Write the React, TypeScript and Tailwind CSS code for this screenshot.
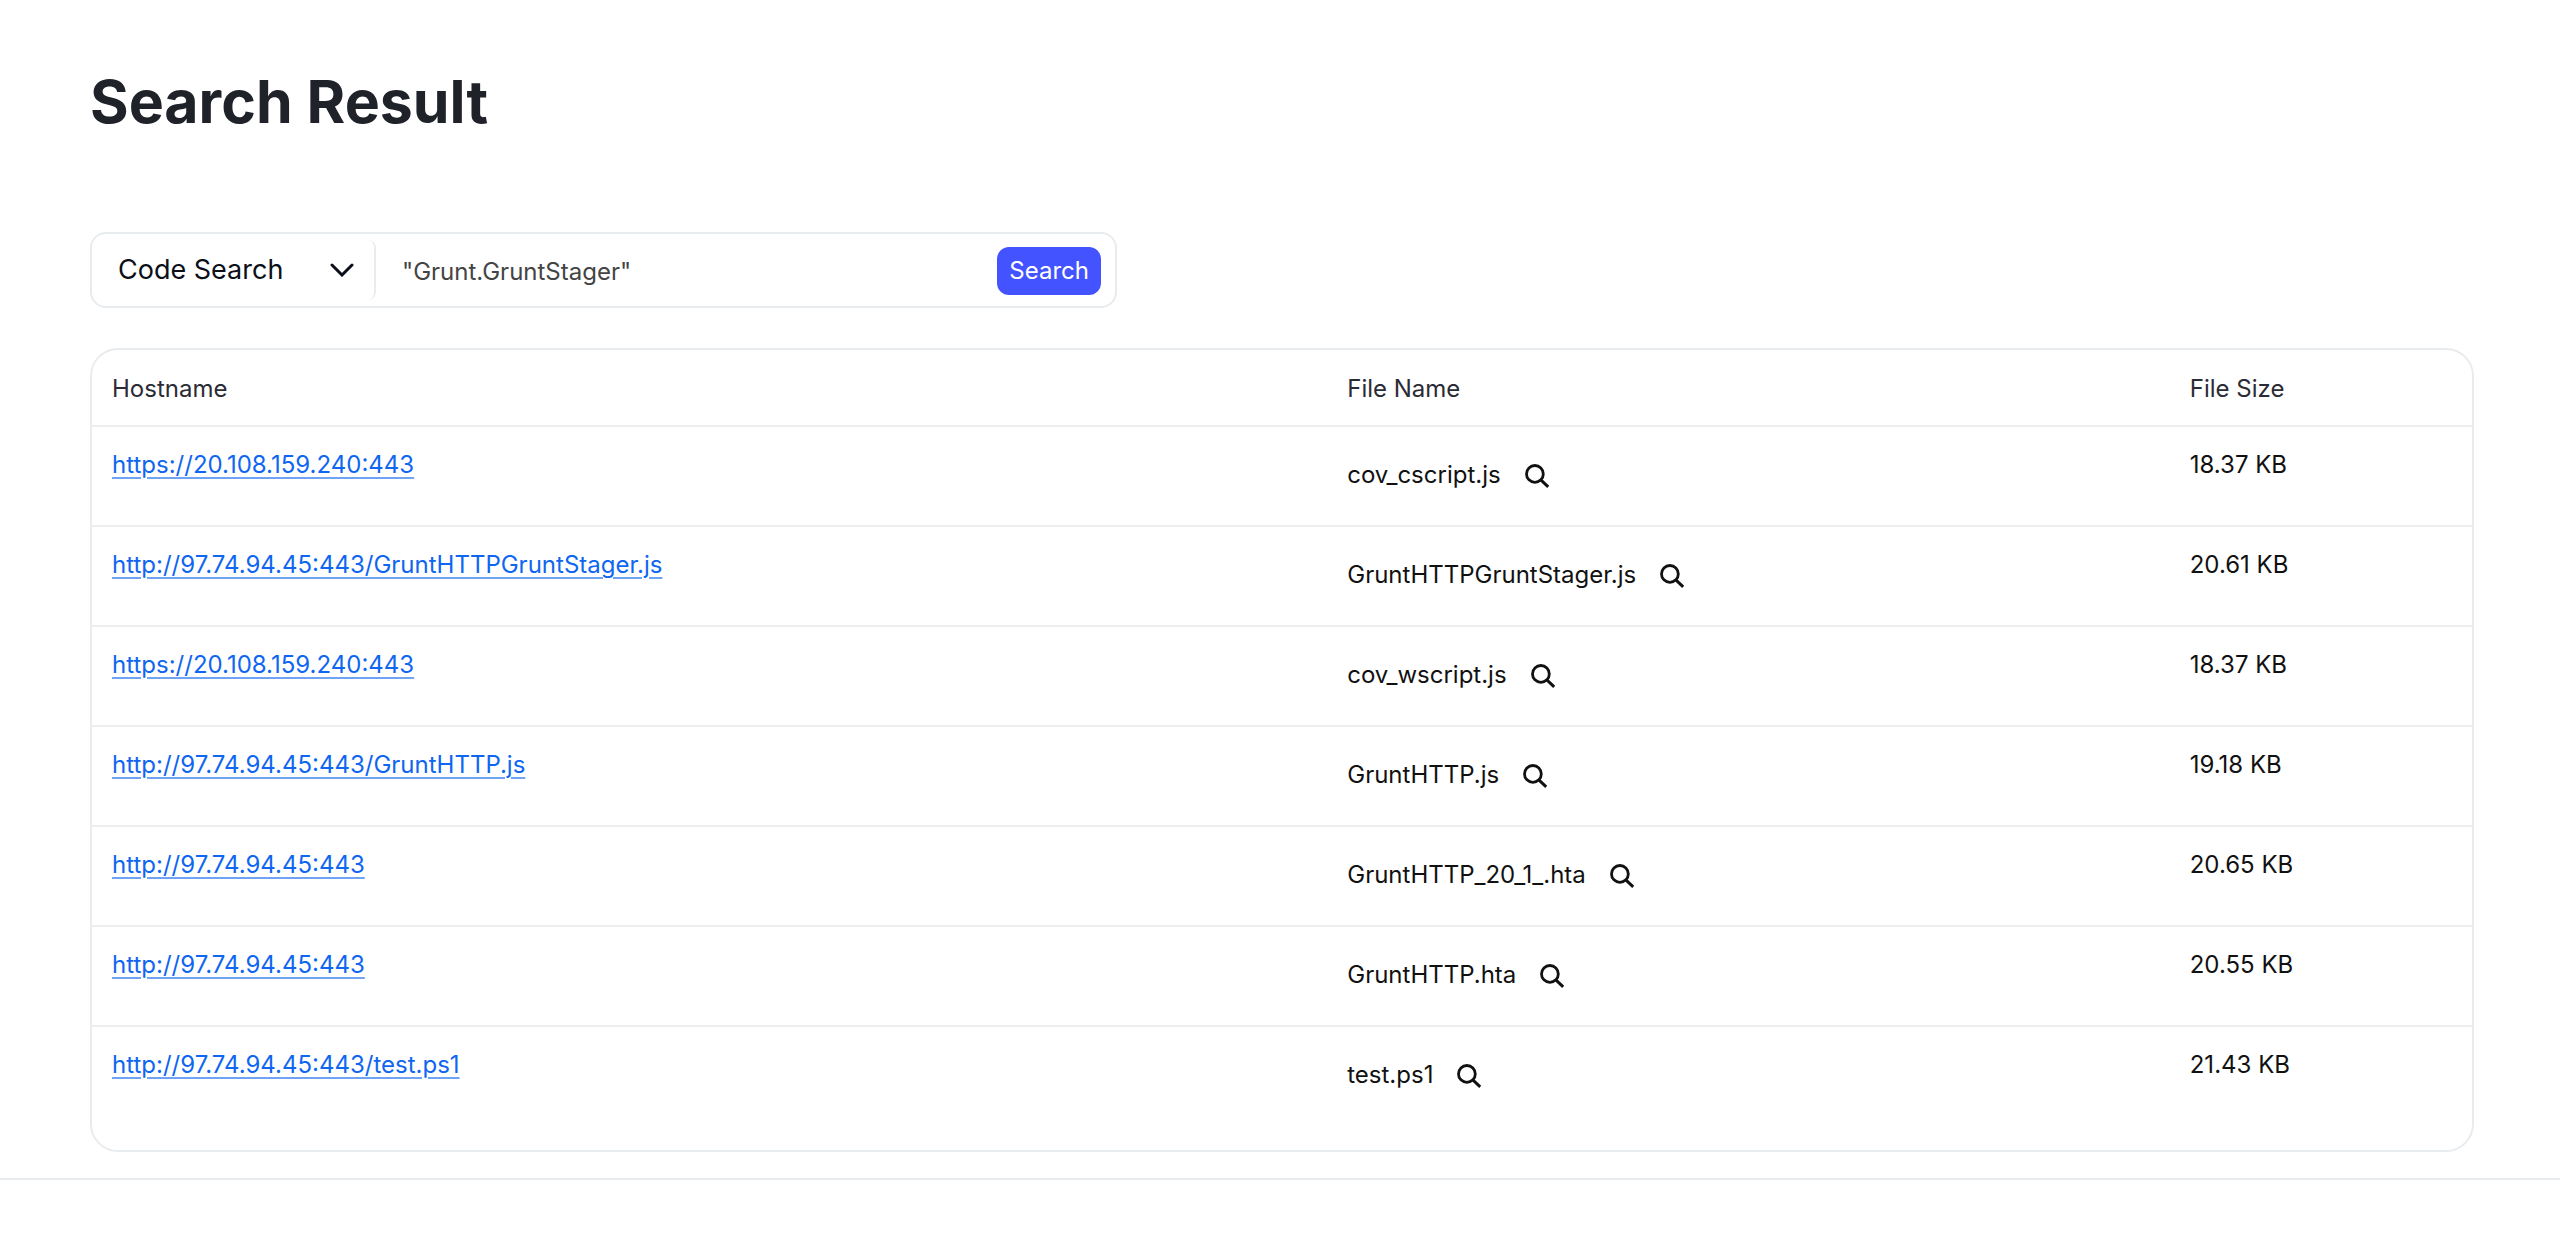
type Result = { host: string; file: string; size: string };

const results: Result[] = [
  { host: "https://20.108.159.240:443", file: "cov_cscript.js", size: "18.37 KB" },
  { host: "http://97.74.94.45:443/GruntHTTPGruntStager.js", file: "GruntHTTPGruntStager.js", size: "20.61 KB" },
  { host: "https://20.108.159.240:443", file: "cov_wscript.js", size: "18.37 KB" },
  { host: "http://97.74.94.45:443/GruntHTTP.js", file: "GruntHTTP.js", size: "19.18 KB" },
  { host: "http://97.74.94.45:443", file: "GruntHTTP_20_1_.hta", size: "20.65 KB" },
  { host: "http://97.74.94.45:443", file: "GruntHTTP.hta", size: "20.55 KB" },
  { host: "http://97.74.94.45:443/test.ps1", file: "test.ps1", size: "21.43 KB" },
];

function MagnifierIcon() {
  return (
    <svg viewBox="0 0 24 24" className="size-6" fill="none" stroke="currentColor" strokeWidth="2.8" aria-hidden="true">
      <circle cx="9.9" cy="9.9" r="8.4" />
      <path d="M15.8 15.8 23.2 22.8" strokeWidth="3" />
    </svg>
  );
}

function ChevronIcon() {
  return (
    <svg viewBox="0 0 24 14" className="pointer-events-none absolute right-5 h-[14px] w-6" fill="none" stroke="currentColor" strokeWidth="3" strokeLinecap="round" strokeLinejoin="miter" aria-hidden="true">
      <path d="M2 2l10 10L22 2" />
    </svg>
  );
}

function SearchBar() {
  return (
    <form className="flex h-[76px] w-full max-w-[1027px] items-center rounded-2xl border-2 border-[#e9ecee] pr-[14px]" onSubmit={(e) => e.preventDefault()}>
      <div className="relative flex h-15 w-[284px] shrink-0 items-center rounded-lg border-r-2 border-[#e9ecee] text-[#0b0f19]">
        <select aria-label="Search type" className="h-full w-full appearance-none bg-transparent pl-[26px] text-[27px] outline-none">
          <option>Code Search</option>
        </select>
        <ChevronIcon />
      </div>
      <input aria-label="Search query" defaultValue={'"Grunt.GruntStager"'} className="h-full min-w-0 flex-1 bg-transparent px-[26px] pt-[2px] text-2xl text-[#444444] outline-none" />
      <button type="submit" className="mt-[2px] h-12 rounded-xl bg-[#4353ff] px-3 text-2xl text-white">
        Search
      </button>
    </form>
  );
}

function ResultsTable() {
  return (
    <div className="mt-10 rounded-[28px] border-2 border-[#e9ecee] pb-6">
      <table className="w-full table-fixed text-left text-2xl text-[#111111]">
        <thead>
          <tr className="h-[76px] border-b-2 border-[#eceeef] text-[#2b2b35]">
            <th scope="col" className="w-[51.9%] px-5 pt-[2px] font-normal">Hostname</th>
            <th scope="col" className="w-[35.4%] px-5 pt-[2px] font-normal">File Name</th>
            <th scope="col" className="px-5 pt-[2px] font-normal">File Size</th>
          </tr>
        </thead>
        <tbody>
          {results.map((r, i) => (
            <tr key={i} className="h-[100px] border-b-2 border-[#eceeef] align-top last:border-b-0">
              <td className="px-5 pt-[22px]">
                <a href={r.host} className="text-[#0f66f0] underline decoration-[#6ea3f5] decoration-2 underline-offset-4">{r.host}</a>
              </td>
              <td className="px-5 pt-8">
                <div className="flex items-center gap-6">
                  <span>{r.file}</span>
                  <button type="button" aria-label={"View " + r.file} className="mt-[2px]">
                    <MagnifierIcon />
                  </button>
                </div>
              </td>
              <td className="px-5 pt-[22px]">{r.size}</td>
            </tr>
          ))}
        </tbody>
      </table>
    </div>
  );
}

export default function App() {
  return (
    <div className="min-h-screen bg-white font-['Inter',sans-serif]">
      <main className="border-b-2 border-[#e9ecee] px-[90px] pt-[66px] pb-[26px] pr-[86px]">
        <h1 className="mb-[94px] text-[59px] leading-[72px] font-bold text-[#20222a]">Search Result</h1>
        <SearchBar />
        <ResultsTable />
      </main>
    </div>
  );
}
